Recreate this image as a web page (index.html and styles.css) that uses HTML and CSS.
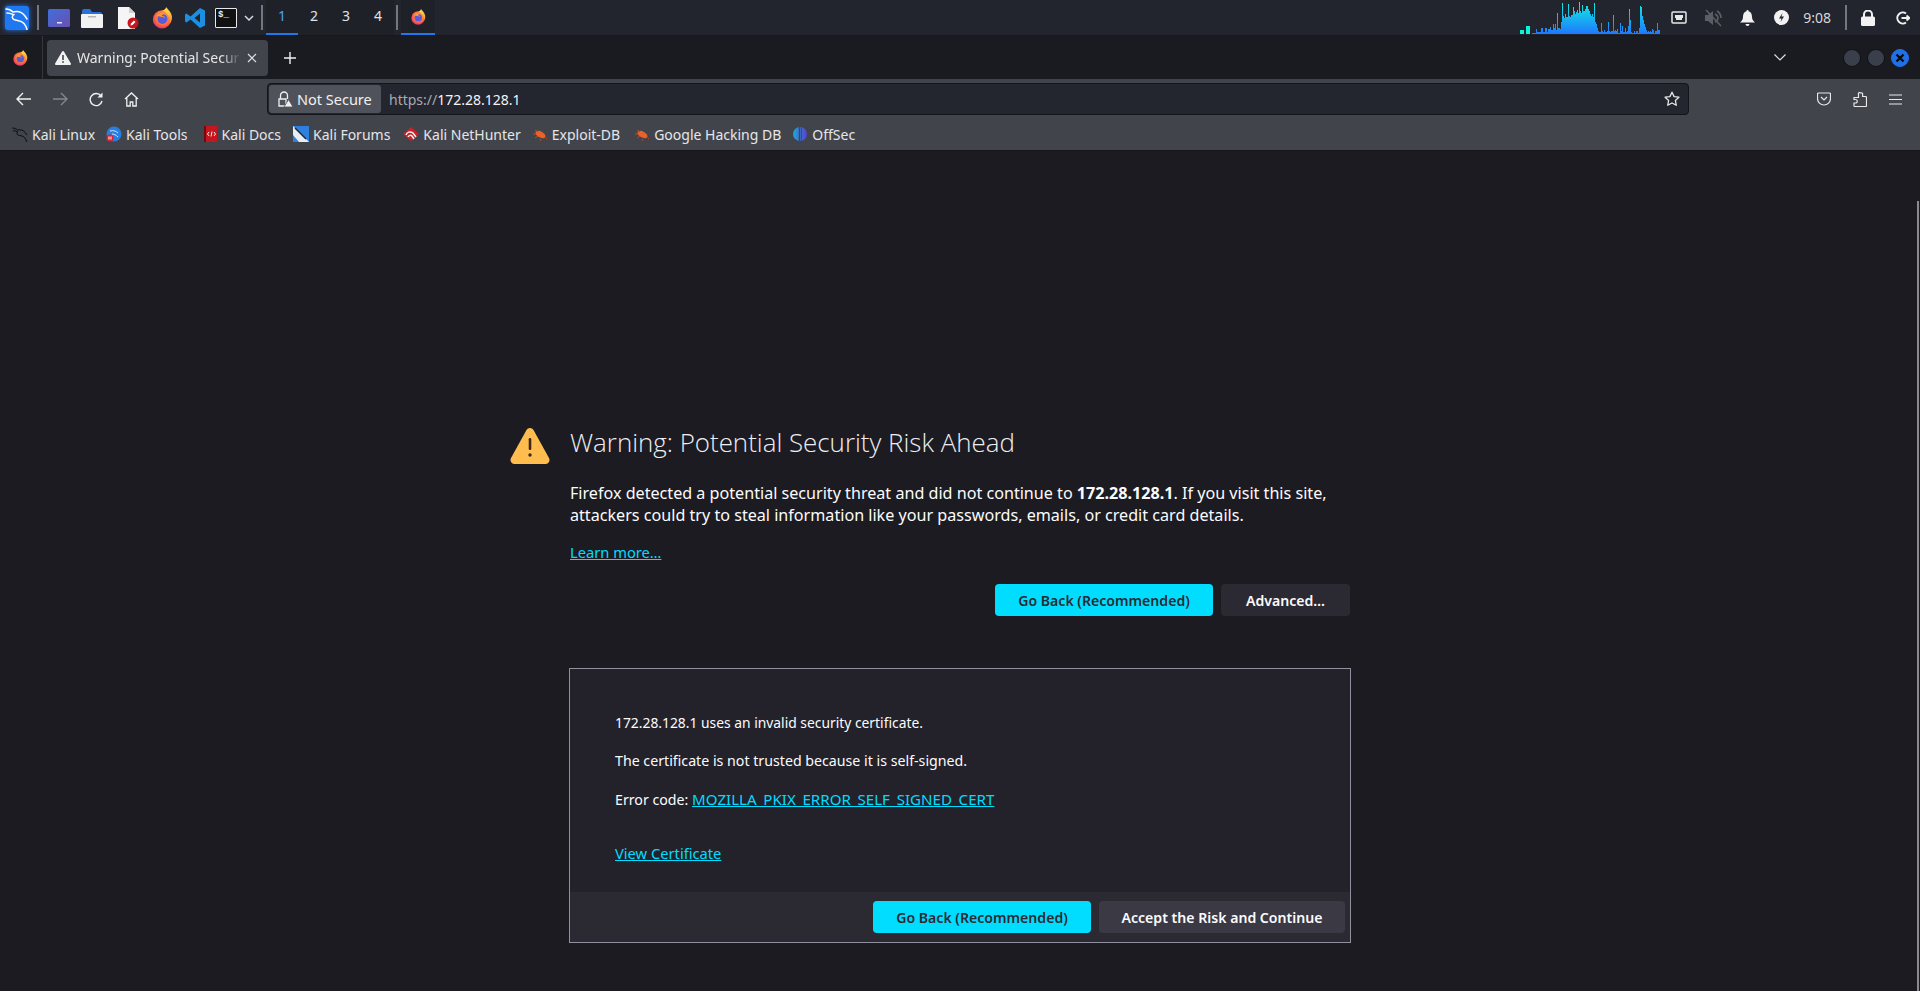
FILE: index.html
```html
<!DOCTYPE html>
<html lang="en">
<head>
    <meta charset="UTF-8">
    <title>Warning: Potential Security Risk Ahead</title>
    <link rel="stylesheet" href="styles.css">
</head>
<body>
    <svg class="defs" width="0" height="0">
        <defs>
            <radialGradient id="ffBody" cx="0.55" cy="0.4" r="0.7">
                <stop offset="0" stop-color="#ffbd4f"/>
                <stop offset="0.55" stop-color="#ff7139"/>
                <stop offset="1" stop-color="#e31587"/>
            </radialGradient>
            <linearGradient id="ffFlame" x1="0" y1="0" x2="0" y2="1">
                <stop offset="0" stop-color="#ffe14d"/>
                <stop offset="1" stop-color="#ff8a2b"/>
            </linearGradient>
            <linearGradient id="cpuGrad" gradientUnits="userSpaceOnUse" x1="0" y1="32" x2="0" y2="0">
                <stop offset="0" stop-color="#1f78ff"/>
                <stop offset="1" stop-color="#0ff0e0"/>
            </linearGradient>
            <linearGradient id="desk" x1="0" y1="0" x2="1" y2="1">
                <stop offset="0" stop-color="#3f6fdc"/>
                <stop offset="1" stop-color="#6a4fb0"/>
            </linearGradient>
            <linearGradient id="offsec" x1="0" y1="0" x2="1" y2="0">
                <stop offset="0" stop-color="#1ea7d8"/>
                <stop offset="1" stop-color="#5a3fd0"/>
            </linearGradient>
            <symbol id="firefox" viewBox="0 0 24 24">
                <circle cx="12" cy="13.5" r="10" fill="url(#ffBody)"/>
                <path d="M12 4c3-1 4-2 4.500-4 1 2 5.500 5 6.300 10 .4 3-.5 6-2.300 8 .8-4-.5-8-3-10.500C15.500 5.500 14 4.500 12 4z" fill="url(#ffFlame)"/>
                <circle cx="12.500" cy="13" r="5.500" fill="#5b5bd6"/>
                <path d="M6 9.500c2-2.500 6-3.500 9-2 -2 .3-3 1-3.500 2.200 2.500 0 3.500 1 4 2.300C13 10.500 9 10.500 6 9.500z" fill="#ff9a2e"/>
            </symbol>
            <symbol id="dragon" viewBox="0 0 24 24">
                <path d="M1 3c3 0 5 1 7 3 4-1 9 0 12 4l2 3M2 7c2 0 4 .5 6 1.500M9 8.500c-2 1.500-2.500 3.500 0 5 3 1.500 7 .5 10 4 1.500 1.800 2.500 4 3 6" fill="none" stroke="currentColor" stroke-width="1.500" stroke-linecap="round"/>
            </symbol>
            <symbol id="bug" viewBox="0 0 16 16">
                <ellipse cx="8.500" cy="8.500" rx="5.500" ry="3" transform="rotate(30 8.500 8.500)" fill="#e8622a"/>
                <path d="M3 4l3 2M1 8l3 0M3 12l3-2M8 13l1 2M14 12l1 1" stroke="#b9481c" stroke-width="1" fill="none"/>
            </symbol>
        </defs>
    </svg>

    <header class="taskbar">
        <div class="task-left">
            <div class="kali-logo">
                <svg width="24" height="24" viewBox="0 0 24 24"><use href="#dragon" color="#fff" width="24" height="24"/></svg>
            </div>
            <span class="task-sep"></span>
            <div class="launchers">
                <svg class="launcher" width="22" height="18" viewBox="0 0 22 18"><rect width="22" height="18" rx="1.500" fill="url(#desk)"/><rect x="9" y="13" width="5" height="1.500" fill="#dfe3ff"/></svg>
                <svg class="launcher" width="22" height="20" viewBox="0 0 22 20"><path d="M1 3a2 2 0 0 1 2-2h6l2 3h8a2 2 0 0 1 2 2v3H1z" fill="#2b6fd8"/><rect y="6" width="22" height="14" rx="1" fill="#f2f2f2"/><rect x="7" y="8" width="8" height="1.500" fill="#b5b5b5"/></svg>
                <svg class="launcher" width="22" height="22" viewBox="0 0 22 22"><path d="M1 0h11l6 6v16H1z" fill="#f5f5f5"/><path d="M12 0l6 6h-6z" fill="#cfcfcf"/><circle cx="16" cy="16" r="5.500" fill="#c8141c"/><path d="M13.500 18.500l.5-2 3-3 1.500 1.500-3 3z" fill="#fff"/></svg>
                <svg class="launcher" width="22" height="22"><use href="#firefox" width="22" height="22"/></svg>
                <svg class="launcher" width="22" height="22" viewBox="0 0 22 22"><path d="M16 1l5 2.500v15L16 21 6.500 12.500 2.500 15.500 1 14.500v-7l1.500-1 4 3zM16 6.500L10.500 11l5.500 4.500z" fill="#1c8fe0"/></svg>
                <div class="term-icon">$_</div>
                <svg class="launcher-more" width="10" height="6" viewBox="0 0 10 6"><path d="M1 1l4 4 4-4" fill="none" stroke="#d5d7dc" stroke-width="1.500"/></svg>
            </div>
            <span class="task-sep"></span>
            <div class="workspaces">
                <div class="ws ws-active">1</div>
                <div class="ws">2</div>
                <div class="ws">3</div>
                <div class="ws">4</div>
            </div>
            <span class="task-sep"></span>
            <div class="window-btn">
                <svg width="16" height="16"><use href="#firefox" width="16" height="16"/></svg>
            </div>
        </div>
        <div class="task-right">
            <div class="cpu-small"><span class="cpu-a"></span><span class="cpu-b"></span></div>
            <svg class="cpu-graph" width="128" height="32" viewBox="0 0 128 32">
                <path fill="url(#cpuGrad)" d="M0 32V31h4V27h1V30h4V26h2V30h2V26h2V30h1V27h2V25h1V28h2V22h1V26h1V22h1V28h1V11h1V26h2V27h1V20h1V1h1V14h1V16h1V12h1V15h1V15h1V2h1V14h1V15h1V13h1V13h1V5h1V9h1V12h1V10h1V8h1V11h1V0h1V9h1V11h1V3h1V9h1V9h1V7h1V4h2V7h1V9h1V12h1V14h1V12h1V15h1V1h1V20h1V22h1V26h1V29h1V30h2V21h1V29h1V30h1V28h1V30h2V29h1V20h1V29h1V30h1V29h2V13h1V29h1V28h1V29h1V27h1V31h2V21h1V29h1V24h1V30h2V26h1V30h1V29h1V24h1V7h1V18h1V30h1V31h2V29h1V31h1V29h2V31h1V26h1V4h1V5h1V14h1V18h1V22h1V25h1V28h1V30h1V29h1V30h1V29h1V30h1V27h1V28h1V31h1V29h2V21h1V28h2V32z"/>
            </svg>
            <svg class="tray net" width="16" height="14" viewBox="0 0 16 14"><path d="M2 1h12a1 1 0 0 1 1 1v9a1 1 0 0 1-1 1H2a1 1 0 0 1-1-1V2a1 1 0 0 1 1-1z" fill="none" stroke="#e8e8e8" stroke-width="1.500"/><path d="M4 4h8v3h-1v2H5V7H4z" fill="#e8e8e8"/></svg>
            <svg class="tray mute" width="18" height="18" viewBox="0 0 18 18"><path d="M1 6h3l5-4v14l-5-4H1z" fill="#5c5e64"/><path d="M11 5c2 1 3 2.500 3 4s-1 3-3 4M13 2c3 2 4 4.500 4 7M2 1l15 16" fill="none" stroke="#5c5e64" stroke-width="1.600"/></svg>
            <svg class="tray bell" width="15" height="16" viewBox="0 0 15 16"><path d="M7.500 0a1 1 0 0 1 1 1.200C11 2 12 4 12 7c0 2 1 4 3 5.500H0C2 11 3 9 3 7c0-3 1-5 3.500-5.800A1 1 0 0 1 7.500 0zM5.500 14h4a2 2 0 0 1-4 0z" fill="#f2f2f2"/></svg>
            <svg class="tray bolt" width="15" height="15" viewBox="0 0 15 15"><circle cx="7.500" cy="7.500" r="7.500" fill="#f2f2f2"/><path d="M8.500 3L5 8.500h2.500L6.500 12 10 6.500H7.500z" fill="#23252e"/></svg>
            <span class="clock">9:08</span>
            <span class="task-sep sep-right"></span>
            <svg class="tray lock" width="14" height="16" viewBox="0 0 14 16"><path d="M3 7V4.500a4 4 0 0 1 8 0V7" fill="none" stroke="#f2f2f2" stroke-width="2"/><rect y="6.500" width="14" height="9.500" rx="1.500" fill="#f2f2f2"/></svg>
            <svg class="tray power" width="15" height="14" viewBox="0 0 15 14"><path d="M11 2.500A5.500 5.500 0 1 0 11 11.500" fill="none" stroke="#f2f2f2" stroke-width="2"/><path d="M6.500 7h8M11.500 4.500L14.500 7 11.500 9.500" fill="none" stroke="#f2f2f2" stroke-width="1.800"/></svg>
        </div>
    </header>

    <div class="tabbar">
        <div class="tab-app">
            <svg width="16" height="16"><use href="#firefox" width="16" height="16"/></svg>
        </div>
        <div class="tab">
            <svg class="tab-icon" width="16" height="14" viewBox="0 0 16 14"><path d="M8 0a1 1 0 0 1 .9.500l7 12a1 1 0 0 1-.9 1.500H1a1 1 0 0 1-.9-1.500l7-12A1 1 0 0 1 8 0z" fill="#f2f2f2"/><rect x="7.200" y="4" width="1.600" height="5" fill="#42444c"/><rect x="7.200" y="10.200" width="1.600" height="1.600" fill="#42444c"/></svg>
            <span class="tab-title">Warning: Potential Security Risk Ahead</span>
            <svg class="tab-close" width="10" height="10" viewBox="0 0 10 10"><path d="M1 1l8 8M9 1l-8 8" stroke="#e0e0e0" stroke-width="1.200"/></svg>
        </div>
        <svg class="new-tab" width="12" height="12" viewBox="0 0 12 12"><path d="M6 0v12M0 6h12" stroke="#f0f0f0" stroke-width="1.400"/></svg>
        <svg class="tab-list" width="12" height="7" viewBox="0 0 12 7"><path d="M.5.500L6 6 11.500.500" fill="none" stroke="#e0e0e0" stroke-width="1.200"/></svg>
        <div class="win-btns">
            <span class="win-btn"></span>
            <span class="win-btn"></span>
            <span class="win-btn win-close">
                <svg width="10" height="10" viewBox="0 0 10 10"><path d="M1.500 1.500l7 7M8.500 1.500l-7 7" stroke="#0b0b0b" stroke-width="2.400"/></svg>
            </span>
        </div>
    </div>

    <nav class="navbar">
        <div class="nav-btns">
            <svg width="16" height="14" viewBox="0 0 16 14"><path d="M15 7H1.500M7 1L1 7l6 6" fill="none" stroke="#f0f0f0" stroke-width="1.400"/></svg>
            <svg width="16" height="14" viewBox="0 0 16 14"><path d="M1 7h13.500M9 1l6 6-6 6" fill="none" stroke="#85878d" stroke-width="1.400"/></svg>
            <svg class="nav-reload" width="15" height="15" viewBox="0 0 15 15"><path d="M13 9a6 6 0 1 1-1-5" fill="none" stroke="#f0f0f0" stroke-width="1.400"/><path d="M13.500.500v5h-5z" fill="#f0f0f0"/></svg>
            <svg width="15" height="15" viewBox="0 0 15 15"><path d="M1 7L7.500 1 14 7M2.800 6v8h3.400v-4h2.600v4h3.400V6" fill="none" stroke="#f0f0f0" stroke-width="1.300"/></svg>
        </div>
        <div class="urlbar">
            <div class="not-secure">
                <svg width="16" height="16" viewBox="0 0 16 16"><path d="M3.500 8V4.500a3.500 3.500 0 0 1 7 0V8M2 8h7v7H2z" fill="none" stroke="#f0f0f0" stroke-width="1.300"/><path d="M11.500 8.500L16 16H7z" fill="#f0f0f0" stroke="#50525b" stroke-width=".8"/></svg>
                <span>Not Secure</span>
            </div>
            <span class="url"><span class="url-scheme">https://</span>172.28.128.1</span>
            <svg class="star" width="16" height="16" viewBox="0 0 16 16"><path d="M8 1.200l2.100 4.400 4.800.6-3.500 3.300.9 4.800L8 12l-4.300 2.300.9-4.800L1.100 6.200l4.800-.6z" fill="none" stroke="#e8e8e8" stroke-width="1.300" stroke-linejoin="round"/></svg>
        </div>
        <div class="nav-right">
            <svg width="14" height="14" viewBox="0 0 14 14"><path d="M1.500 1h11a1 1 0 0 1 1 1v4.500a6.500 6.500 0 0 1-13 0V2a1 1 0 0 1 1-1z" fill="none" stroke="#e8e8e8" stroke-width="1.200"/><path d="M4 5l3 3 3-3" fill="none" stroke="#e8e8e8" stroke-width="1.200"/></svg>
            <svg width="14" height="15" viewBox="0 0 14 15"><path d="M7 .800h1.600a1 1 0 0 1 1 1V4.500h3a1 1 0 0 1 .9 1v8.200a.8.800 0 0 1-.8.800H1.800a.8.800 0 0 1-.8-.8V11h1.500a1.500 1.500 0 0 0 0-3.500H1V5.500h4.500V2a1 1 0 0 1 1.500-1.200z" fill="none" stroke="#e8e8e8" stroke-width="1.200"/></svg>
            <svg width="13" height="11" viewBox="0 0 13 11"><path d="M0 1h13M0 5.500h13M0 10h13" stroke="#e8e8e8" stroke-width="1.200"/></svg>
        </div>
    </nav>

    <div class="bookmarks">
        <a class="bm bm-1"><svg width="16" height="16"><use href="#dragon" color="#0c0c0c" width="16" height="16"/></svg>Kali Linux</a>
        <a class="bm bm-2"><svg width="16" height="16" viewBox="0 0 16 16"><circle cx="8" cy="8" r="7.500" fill="#2a7de1"/><path d="M4 5c3-1 6 0 8 2M6 8c2 0 4 1 6 3" stroke="#cfe4ff" stroke-width="1" fill="none"/><circle cx="4" cy="12" r="3.500" fill="#d9232e"/><path d="M3 10.500v3M5 10.500v3" stroke="#fff"/></svg>Kali Tools</a>
        <a class="bm bm-3"><svg width="14" height="16" viewBox="0 0 14 16"><rect width="13" height="16" fill="#c4161c"/><rect width="2" height="16" fill="#6d0b0f"/><path d="M5 6L3.500 8 5 10M10 6l1.500 2L10 10M8 5.500L7 10.500" stroke="#fff" stroke-width=".9" fill="none"/></svg>Kali Docs</a>
        <a class="bm bm-4"><svg width="16" height="16" viewBox="0 0 16 16"><rect width="16" height="16" fill="#2d7fe0"/><path d="M0 0l16 16H6L0 9z" fill="#e8eef5"/><path d="M2 2l11 11" stroke="#20242c" stroke-width="1.400"/></svg>Kali Forums</a>
        <a class="bm bm-5"><svg width="16" height="16" viewBox="0 0 16 16"><path d="M0 8L8 1l8 7-8 7z" fill="#c9202a"/><path d="M3 9c1-3 4-4 7-2l3 4M5 11c1-2 3-2 4-1l2 3" stroke="#f2f2f2" stroke-width="1.500" fill="none"/></svg>Kali NetHunter</a>
        <a class="bm bm-6"><svg width="16" height="16"><use href="#bug" width="16" height="16"/></svg>Exploit-DB</a>
        <a class="bm bm-7"><svg width="16" height="16"><use href="#bug" width="16" height="16"/></svg>Google Hacking DB</a>
        <a class="bm bm-8"><svg width="16" height="16" viewBox="0 0 16 16"><circle cx="8" cy="8" r="7" fill="url(#offsec)"/><rect x="6.800" y="0" width="1.200" height="16" fill="#43464f"/><rect x="8.800" y="1" width="1" height="14" fill="#43464f"/></svg>OffSec</a>
    </div>

    <main class="page">
        <div class="scroll-thumb"></div>
        <div class="container">
            <div class="title-row">
                <svg class="warn-icon" width="40" height="38" viewBox="0 0 40 38"><path d="M20 1c1.500 0 2.800.8 3.500 2l15.500 28c1.500 2.800-.4 6-3.500 6h-31c-3.100 0-5-3.200-3.500-6L16.500 3c.7-1.200 2-2 3.500-2z" fill="#ffbd4f"/><rect x="18.700" y="11" width="2.600" height="12" rx="1.300" fill="#3a2a10"/><circle cx="20" cy="28" r="1.700" fill="#3a2a10"/></svg>
                <h1>Warning: Potential Security Risk Ahead</h1>
            </div>
            <p class="intro">Firefox detected a potential security threat and did not continue to <b>172.28.128.1</b>. If you visit this site,<br>attackers could try to steal information like your passwords, emails, or credit card details.</p>
            <a class="learn-more">Learn more…</a>
            <div class="btn-row">
                <button class="btn btn-primary">Go Back (Recommended)</button>
                <button class="btn btn-dark">Advanced…</button>
            </div>
            <section class="advanced">
                <div class="adv-body">
                    <p class="adv-host">172.28.128.1 uses an invalid security certificate.</p>
                    <p>The certificate is not trusted because it is self-signed.</p>
                    <p>Error code: <a class="err-code">MOZILLA_PKIX_ERROR_SELF_SIGNED_CERT</a></p>
                    <a class="view-cert">View Certificate</a>
                </div>
                <div class="adv-footer">
                    <button class="btn btn-primary btn-back2">Go Back (Recommended)</button>
                    <button class="btn btn-grey">Accept the Risk and Continue</button>
                </div>
            </section>
        </div>
    </main>
</body>
</html>
```

FILE: styles.css
```css
* {
    box-sizing: border-box;
}

body, html {
    margin: 0;
    padding: 0;
    width: 100%;
    height: 100%;
    overflow: hidden;
    background: #1c1b22;
    font-family: "Noto Sans", sans-serif;
    color: #fbfbfe;
}

.defs {
    display: block;
    height: 0;
}

/* top panel */
.taskbar {
    height: 36px;
    background: #23252e;
    border-bottom: 1px solid #17181d;
    display: flex;
    justify-content: space-between;
}

.task-left,
.task-right {
    display: flex;
    align-items: center;
}

.kali-logo {
    width: 24px;
    height: 24px;
    margin-left: 5px;
    border-radius: 3px;
    background: #1f78f0;
    box-shadow: 0 0 5px #1f78f0;
}

.kali-logo svg {
    display: block;
}

.task-sep {
    width: 2px;
    height: 25px;
    background: #75777c;
}

.task-left > .task-sep:first-of-type {
    margin-left: 8px;
}

.launchers {
    display: flex;
    align-items: center;
    margin-left: 9px;
    width: 213px;
}

.launcher {
    margin-right: 11px;
}

.launcher:nth-child(3) {
    margin-left: 3px;
    margin-right: 12px;
}

.launcher:nth-child(4) {
    margin-right: 11px;
}

.launcher:nth-child(5) {
    margin-right: 9px;
}

.term-icon {
    width: 22px;
    height: 20px;
    border: 1px solid #e8e8e8;
    border-radius: 1px;
    background: #111;
    color: #eee;
    font: bold 9px/12px "Liberation Mono", monospace;
    padding-left: 2px;
    flex: none;
}

.launcher-more {
    margin-left: 7px;
    flex: none;
}

.workspaces {
    display: flex;
    align-self: stretch;
    margin-left: 3px;
    margin-right: 2px;
    background: #1f2129;
}

.ws {
    width: 32px;
    padding-bottom: 2px;
    display: flex;
    align-items: center;
    justify-content: center;
    font-size: 14px;
    color: #e0e2e6;
    border-bottom: 2px solid transparent;
}

.ws-active {
    color: #4ea0ff;
    border-bottom-color: #1f78f0;
}

.window-btn {
    align-self: stretch;
    width: 34px;
    margin-left: 3px;
    background: #1f2129;
    border-bottom: 2px solid #1f78f0;
    display: flex;
    align-items: center;
    justify-content: center;
}

.cpu-small {
    display: flex;
    align-items: flex-end;
    gap: 2px;
    align-self: flex-end;
    margin-bottom: 1px;
}

.cpu-a {
    width: 4px;
    height: 4px;
    background: #0af5d8;
}

.cpu-b {
    width: 4px;
    height: 8px;
    background: #0af5d8;
}

.cpu-graph {
    align-self: flex-end;
    margin-bottom: 1px;
    margin-left: 2px;
}

.tray {
    flex: none;
}

.net {
    margin-left: 11px;
}

.mute {
    margin-left: 17px;
}

.bell {
    margin-left: 18px;
}

.bolt {
    margin-left: 19px;
}

.clock {
    margin-left: 14px;
    font-size: 14px;
    color: #d5d7dc;
}

.sep-right {
    margin-left: 14px;
}

.lock {
    margin-left: 14px;
}

.power {
    margin-left: 20px;
    margin-right: 10px;
}

/* firefox tab strip */
.tabbar {
    height: 43px;
    background: #1a1b20;
    display: flex;
    align-items: center;
}

.tab-app {
    width: 43px;
    height: 100%;
    border-right: 1px solid #34363c;
    padding-left: 12px;
    display: flex;
    align-items: center;
}

.tab {
    width: 221px;
    height: 36px;
    margin-left: 4px;
    padding-left: 8px;
    padding-right: 11px;
    background: #42444c;
    border-radius: 4px;
    display: flex;
    align-items: center;
    gap: 6px;
}

.tab-icon {
    flex: none;
}

.tab-title {
    flex: 1;
    min-width: 0;
    overflow: hidden;
    white-space: nowrap;
    font-size: 14px;
    color: #e6e6e8;
    -webkit-mask-image: linear-gradient(to right, #000 88%, transparent);
    mask-image: linear-gradient(to right, #000 88%, transparent);
}

.tab-close {
    flex: none;
}

.new-tab {
    margin-left: 16px;
}

.tab-list {
    margin-left: auto;
}

.win-btns {
    display: flex;
    gap: 6px;
    margin-left: 57px;
    margin-right: 11px;
}

.win-btn {
    width: 18px;
    height: 18px;
    border-radius: 50%;
    background: #3a3f4c;
    border: 1px solid #101116;
}

.win-close {
    background: #2170e8;
    border-color: #2170e8;
    display: flex;
    align-items: center;
    justify-content: center;
}

/* nav bar */
.navbar {
    height: 36px;
    background: #42444c;
    display: flex;
    align-items: flex-start;
    padding-top: 4px;
}

.nav-btns {
    display: flex;
    align-items: center;
    gap: 20px;
    width: 267px;
    height: 32px;
    padding-left: 16px;
}

.nav-reload {
    margin-left: 1px;
}

.urlbar {
    width: 1422px;
    height: 32px;
    background: #23252f;
    border: 1px solid #14151a;
    border-radius: 4px;
    display: flex;
    align-items: center;
    padding: 1px;
}

.not-secure {
    height: 28px;
    width: 112px;
    background: #50525b;
    border-radius: 3px;
    display: flex;
    align-items: center;
    gap: 4px;
    padding-left: 8px;
    font-size: 14.500px;
    color: #f0f0f0;
    white-space: nowrap;
}

.url {
    margin-left: 8px;
    font-size: 14px;
    color: #f4f4f6;
}

.url-scheme {
    color: #a8aab0;
}

.star {
    margin-left: auto;
    margin-right: 7px;
}

.nav-right {
    display: flex;
    align-items: center;
    gap: 22px;
    height: 32px;
    margin-left: 128px;
}

/* bookmarks toolbar */
.bookmarks {
    height: 36px;
    background: #42444c;
    border-bottom: 1px solid #14151a;
    display: flex;
    align-items: center;
    padding-left: 12px;
    padding-top: 3px;
}

.bm {
    display: flex;
    align-items: center;
    gap: 4px;
    font-size: 14px;
    color: #e6e6e8;
    white-space: nowrap;
}

.bm-2 { margin-left: 11px; }
.bm-3 { margin-left: 16px; }
.bm-4 { margin-left: 12px; }
.bm-5 { margin-left: 13px; }
.bm-6 { margin-left: 11px; }
.bm-7 { margin-left: 14px; }
.bm-8 { margin-left: 11px; }

/* error page */
.page {
    position: relative;
    height: 840px;
    padding-top: 276px;
    display: flex;
    justify-content: center;
}

.scroll-thumb {
    position: absolute;
    right: 1px;
    top: 50px;
    bottom: 0;
    width: 2px;
    background: #8a8b90;
}

.container {
    width: 782px;
}

.title-row {
    display: flex;
    align-items: center;
    height: 30px;
}

.warn-icon {
    flex: none;
    margin-left: -59px;
    margin-right: 20px;
    margin-top: 8px;
}

h1 {
    margin: 0;
    font-family: "Open Sans", sans-serif;
    font-size: 25.900px;
    font-weight: 300;
    line-height: 30px;
    color: #eeeef2;
}

.intro {
    margin: 25px 0 0;
    padding-left: 1px;
    font-size: 16.140px;
    line-height: 22px;
}

.learn-more {
    display: inline-block;
    margin-top: 16px;
    margin-left: 1px;
    font-size: 14.700px;
    line-height: 20px;
    color: #00ddff;
    text-decoration: underline;
}

.btn-row {
    display: flex;
    justify-content: flex-end;
    gap: 8px;
    margin-top: 21px;
    padding-right: 1px;
}

.btn {
    height: 32px;
    border: none;
    border-radius: 4px;
    font-family: "Noto Sans", sans-serif;
    font-size: 14.100px;
    font-weight: 600;
    padding: 0;
}

.btn-primary {
    width: 218px;
    background: #00ddff;
    color: #2b2a33;
}

.btn-dark {
    width: 129px;
    background: #2b2a33;
    color: #fbfbfe;
}

.advanced {
    margin-top: 52px;
    height: 275px;
    background: #23222b;
    border: 1px solid #8f8f9d;
    display: flex;
    flex-direction: column;
}

.adv-body {
    flex: 1;
    padding: 44px 45px 0;
    font-size: 14.200px;
    line-height: 20px;
}

.adv-body p {
    margin: 0 0 18px;
}

.adv-body .adv-host {
    font-size: 13.850px;
}

.err-code,
.view-cert {
    color: #00ddff;
    text-decoration: underline;
}

.err-code {
    font-size: 15.100px;
}

.view-cert {
    display: inline-block;
    margin-top: 15px;
    font-size: 14.700px;
}

.adv-footer {
    height: 50px;
    background: #2b2a33;
    display: flex;
    justify-content: flex-end;
    gap: 8px;
    padding: 9px 5px 0;
}

.btn-grey {
    width: 246px;
    background: #3a3944;
    color: #fbfbfe;
}
```
